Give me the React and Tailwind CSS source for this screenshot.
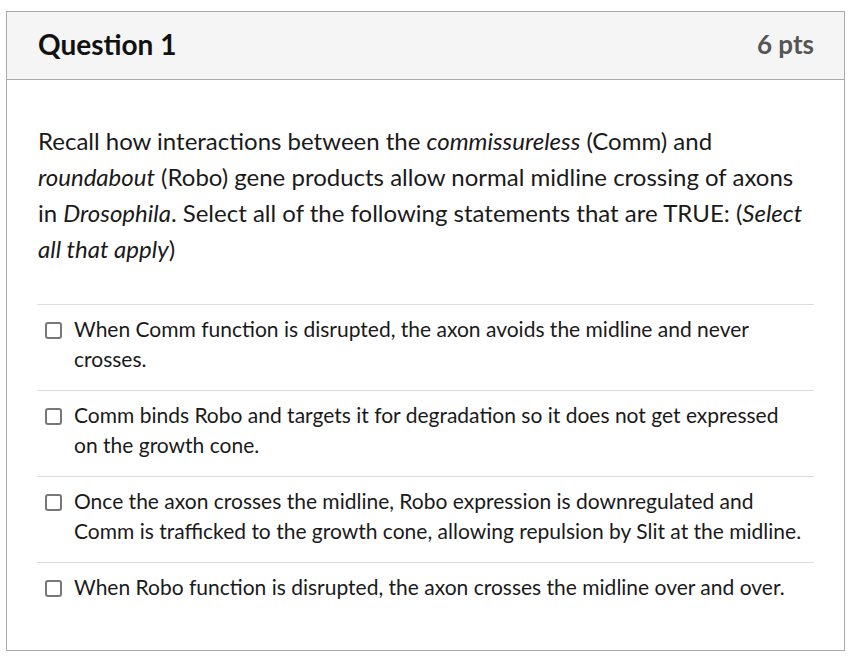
export default function App() {
  const answers = [
    "When Comm function is disrupted, the axon avoids the midline and never crosses.",
    "Comm binds Robo and targets it for degradation so it does not get expressed on the growth cone.",
    "Once the axon crosses the midline, Robo expression is downregulated and Comm is trafficked to the growth cone, allowing repulsion by Slit at the midline.",
    "When Robo function is disrupted, the axon crosses the midline over and over.",
  ];

  return (
    <div className="bg-white w-[853px] h-[661px] pt-[11px] pl-[6px]" style={{ fontFamily: "Lato, 'Noto Sans', sans-serif" }}>
      <div className="w-[839px] h-[640px] border border-[#a9a9a9] flex flex-col">
        {/* encabezado */}
        <div className="h-[68px] bg-[#f5f5f5] border-b border-[#a9a9a9] flex items-center justify-between pl-[31px] pr-[30px] pb-[3px]">
          <h2 className="text-[28px] font-bold text-[#111]">Question 1</h2>
          <span className="text-[26px] font-bold text-[#555]">6 pts</span>
        </div>

        <div className="px-[30px] pt-[43px]">
          <p className="text-[24px] leading-[36px] text-[#1a1a1a] pl-px">
            Recall how interactions between the <i>commissureless</i> (Comm) and <i>roundabout</i> (Robo) gene products allow normal midline crossing of axons in <i>Drosophila</i>. Select all of the following statements that are TRUE: (<i>Select all that apply</i>)
          </p>

          <div className="mt-[37px]">
            {answers.map((a, i) => (
              <div key={i} className="border-t border-[#dcdcdc] pt-[9px] pb-[16px] flex items-start">
                <div className="w-[17px] h-[17px] border-2 border-[#777] rounded-[3px] mt-[8px] ml-[8px] mr-[12px] shrink-0" />
                <span className="max-w-[730px] text-[21px] leading-[30px] text-[#1a1a1a]">{a}</span>
              </div>
            ))}
          </div>
        </div>
      </div>
    </div>
  );
}
